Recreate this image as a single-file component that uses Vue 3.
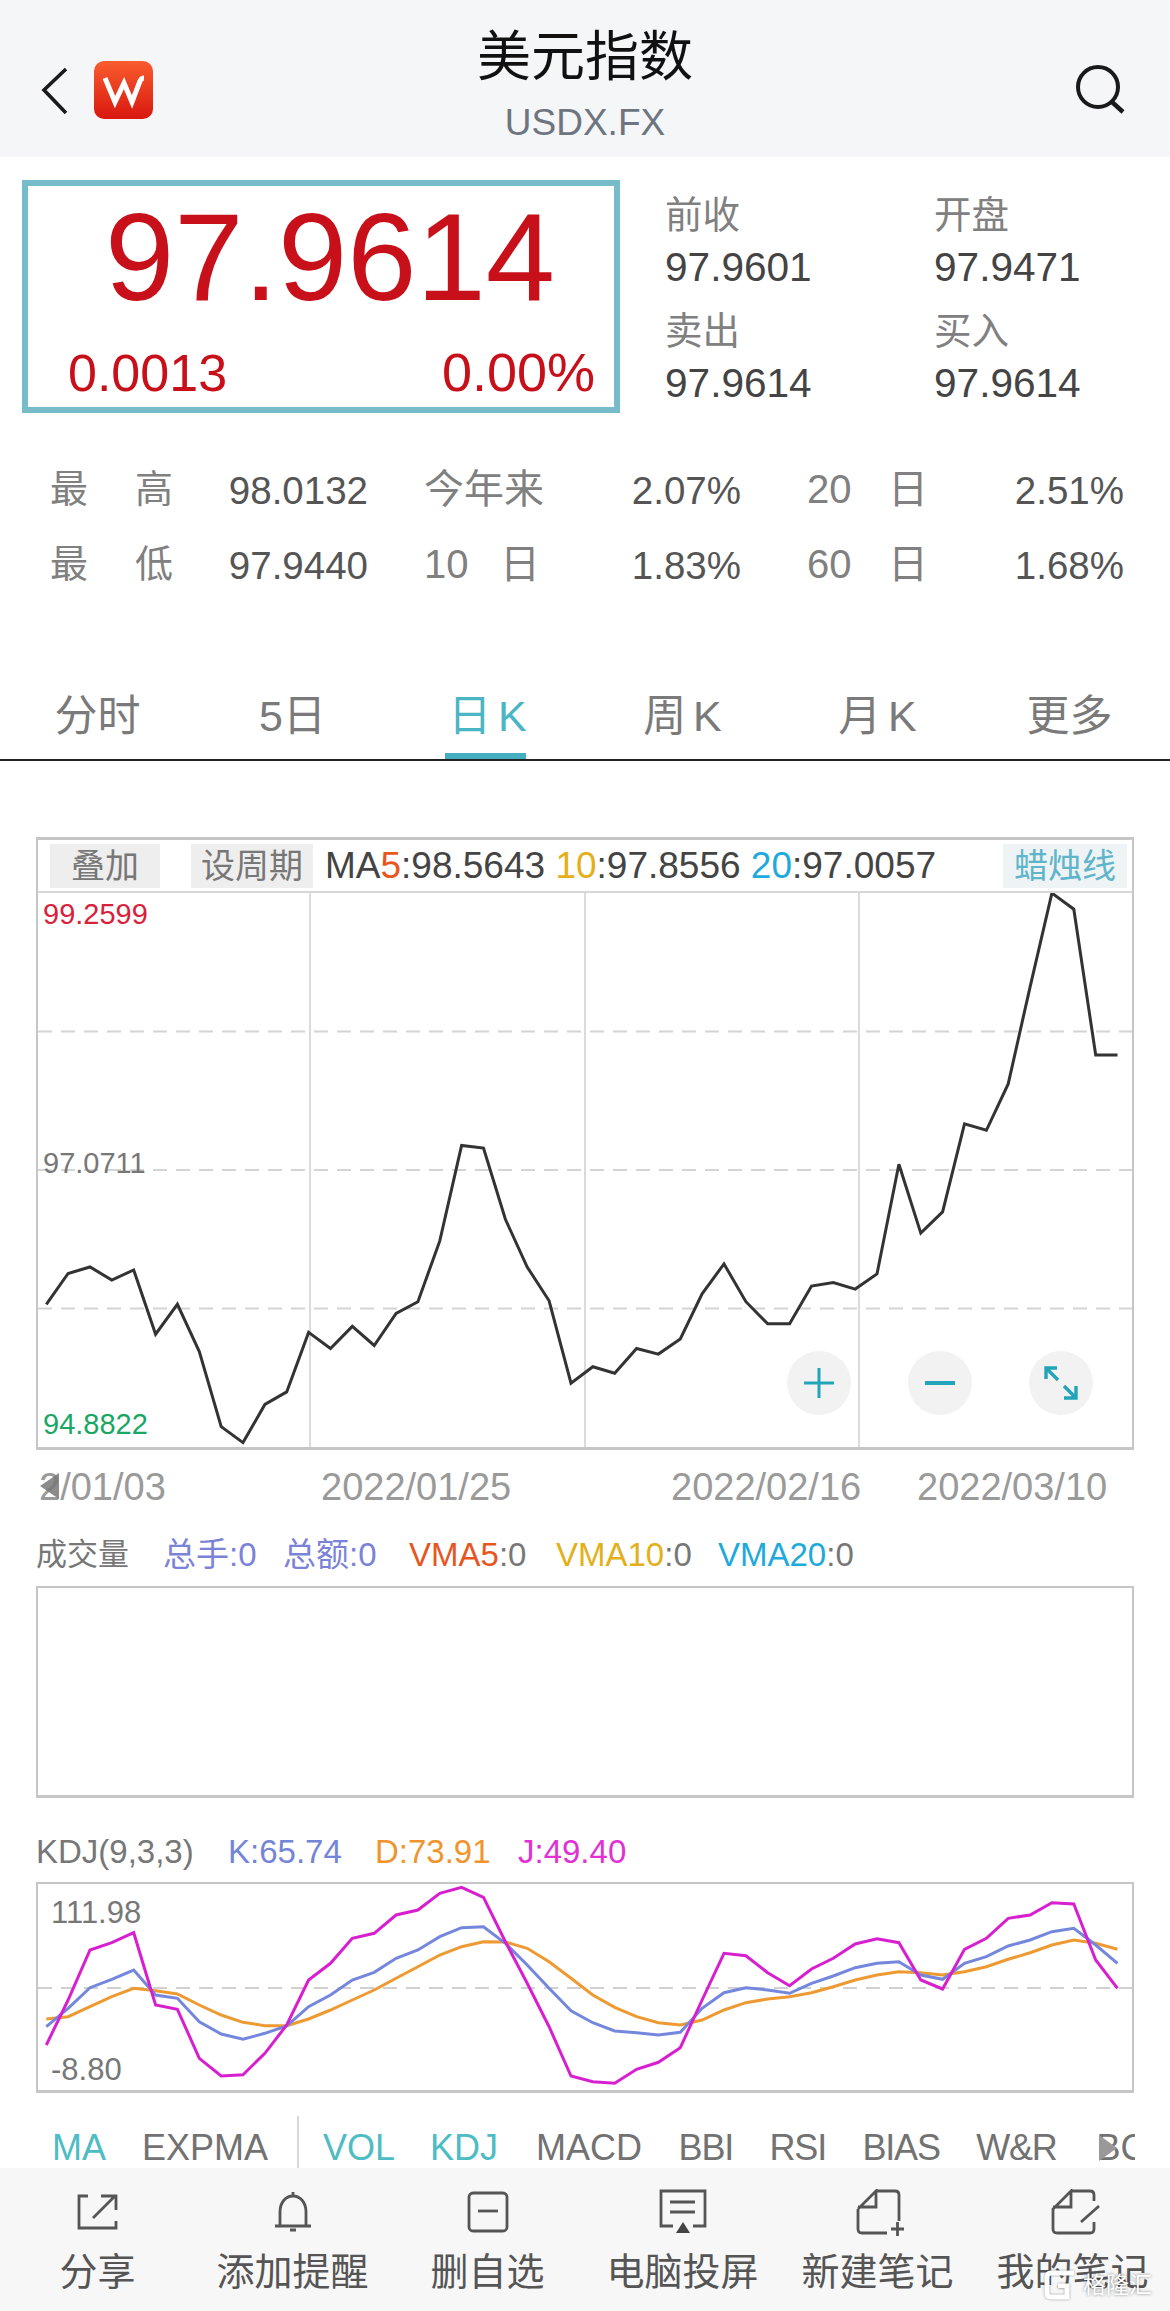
<script setup>
const xs = (i) => 46.25 + i * 21.863
const mainShown = [886,815,800,830,807,955,886,995,1168,1205,1117,1088,951,988,937,981,907,880,740,520,526,690,800,878,1068,1030,1045,988,1001,966,862,793,880,931,931,844,836,851,816,563,722,673,470,485,378,154,-62,-25,311,311]
const jShown = [675,540,390,368,338,555,568,715,768,764,700,615,480,430,355,340,285,270,220,202,232,365,490,620,768,785,790,748,727,683,540,400,407,458,497,447,415,372,356,368,480,507,388,355,295,285,248,252,420,505]
const kShown = [620,565,503,478,450,525,535,605,642,658,640,618,560,525,480,457,415,390,350,323,320,370,435,505,572,608,633,638,645,637,565,518,503,510,520,490,468,443,430,425,465,478,430,410,378,360,335,325,375,430]
const dShown = [597,590,560,530,505,512,522,555,585,607,617,617,597,570,540,510,475,440,405,380,365,366,385,425,475,525,562,590,608,615,600,570,548,537,530,518,500,480,465,455,458,465,455,440,418,398,375,360,370,388]
const pts = (arr, fn) => arr.map((v, i) => `${xs(i).toFixed(1)},${fn(v).toFixed(1)}`).join(' ')
const mainLine = pts(mainShown, (v) => 920 + v * 0.4337)
const kdjY = (v) => 1820 + v / 3
const jLine = pts(jShown, kdjY)
const kLine = pts(kShown, kdjY)
const dLine = pts(dShown, kdjY)
const gridX = [310, 585, 859]
const gridY = [1031.5, 1170, 1308.5]
const tabs = ['分时', '5日', '日 K', '周 K', '月 K', '更多']
const stats = [
  [['最', '高'], '98.0132', ['今年来'], '2.07%', ['20', '日'], '2.51%'],
  [['最', '低'], '97.9440', ['10', '日'], '1.83%', ['60', '日'], '1.68%']
]
const side = [['前收', '97.9601'], ['开盘', '97.9471'], ['卖出', '97.9614'], ['买入', '97.9614']]
const dates = ['2/01/03', '2022/01/25', '2022/02/16', '2022/03/10']
const inds = [['MACD', false], ['BBI', true], ['RSI', true], ['BIAS', true], ['W&R', true]]
const actions = ['分享', '添加提醒', '删自选', '电脑投屏', '新建笔记', '我的笔记']
</script>

<template>
  <div class="page">
    <header class="top">
      <div class="top-left">
        <svg class="chev" width="30" height="50" viewBox="0 0 30 50"><path d="M26 4 L4 25 L26 48" fill="none" stroke="#1a1a1a" stroke-width="3.6"/></svg>
        <div class="logo">
          <svg width="59" height="58" viewBox="0 0 59 58"><path d="M11 17 L21 41 L30 22 L38 41 L46 20 Q47.5 17 50 17" fill="none" stroke="#fff" stroke-width="5"/></svg>
        </div>
      </div>
      <div class="top-mid">
        <div class="title">美元指数</div>
        <div class="sym">USDX.FX</div>
      </div>
      <div class="top-right">
        <svg width="56" height="56" viewBox="0 0 56 56"><circle cx="24" cy="27" r="20" fill="none" stroke="#1a1a1a" stroke-width="4"/><path d="M38 42 L49 52" stroke="#1a1a1a" stroke-width="4.4" fill="none"/></svg>
      </div>
    </header>

    <section class="quote">
      <div class="pbox">
        <div class="price">97.9614</div>
        <div class="chg"><span>0.0013</span><span class="pct">0.00%</span></div>
      </div>
      <div class="side">
        <div v-for="c in side" :key="c[0]" class="cell">
          <div class="cell-l">{{ c[0] }}</div>
          <div class="cell-v">{{ c[1] }}</div>
        </div>
      </div>
    </section>

    <section class="stats">
      <template v-for="(r, ri) in stats" :key="ri">
        <div class="s-lab c1"><span v-for="t in r[0]" :key="t">{{ t }}</span></div>
        <div class="s-val">{{ r[1] }}</div>
        <div class="s-lab c3" :class="{ pair: r[2].length === 2 }"><span v-for="t in r[2]" :key="t">{{ t }}</span></div>
        <div class="s-val">{{ r[3] }}</div>
        <div class="s-lab c5"><span v-for="t in r[4]" :key="t">{{ t }}</span></div>
        <div class="s-val">{{ r[5] }}</div>
      </template>
    </section>

    <nav class="tabs">
      <div v-for="(t, i) in tabs" :key="t" class="tab" :class="{ on: i === 2 }">{{ t }}</div>
    </nav>

    <section class="main">
      <div class="main-head">
        <span class="chip chip-a">叠加</span>
        <span class="chip chip-b">设周期</span>
        <span class="ma">MA<i class="c-o">5</i>:98.5643 <i class="c-y">10</i>:97.8556 <i class="c-b">20</i>:97.0057</span>
        <span class="chip chip-c">蜡烛线</span>
      </div>
      <div class="plot">
        <svg class="plot-svg" width="1094" height="554" viewBox="38 893 1094 554">
          <line v-for="x in gridX" :key="x" :x1="x" :x2="x" y1="893" y2="1447" stroke="#cfcfcf" stroke-width="1.5"/>
          <line v-for="y in gridY" :key="y" x1="38" x2="1132" :y1="y" :y2="y" stroke="#d4d4d4" stroke-width="2" stroke-dasharray="14 9"/>
          <polyline :points="mainLine" fill="none" stroke="#333" stroke-width="3" stroke-linejoin="miter"/>
        </svg>
        <span class="pl pl-hi">99.2599</span>
        <span class="pl pl-mid">97.0711</span>
        <span class="pl pl-lo">94.8822</span>
        <div class="zoom-btns">
          <div class="zb">
            <svg width="64" height="64" viewBox="0 0 64 64"><path d="M17 32 H47 M32 17 V47" stroke="#22a5b8" stroke-width="3" fill="none"/></svg>
          </div>
          <div class="zb">
            <svg width="64" height="64" viewBox="0 0 64 64"><path d="M17 32 H47" stroke="#22a5b8" stroke-width="4" fill="none"/></svg>
          </div>
          <div class="zb">
            <svg width="64" height="64" viewBox="0 0 64 64"><path d="M17 28 V17 H28 M17 17 L29 29 M47 35 V47 H35 M47 47 L35 35" stroke="#22a5b8" stroke-width="3.4" fill="none"/></svg>
          </div>
        </div>
      </div>
    </section>

    <div class="dates">
      <span v-for="d in dates" :key="d" class="date">{{ d }}</span>
      <svg class="d-arrow" width="24" height="36" viewBox="0 0 24 36"><path d="M22 4 L22 30 L3 17 Z" fill="#777"/></svg>
    </div>

    <div class="legend vol-leg">
      <span class="g small">成交量</span>
      <span class="c-p">总手:0</span>
      <span class="c-p">总额:0</span>
      <span class="g"><i class="c-o">VMA5</i>:0</span>
      <span class="g"><i class="c-y">VMA10</i>:0</span>
      <span class="g"><i class="c-b">VMA20</i>:0</span>
    </div>
    <div class="vol-box"></div>

    <div class="legend kdj-leg">
      <span class="g">KDJ(9,3,3)</span>
      <span class="k-k">K:65.74</span>
      <span class="k-d">D:73.91</span>
      <span class="k-j">J:49.40</span>
    </div>
    <div class="kdj-box">
      <svg class="kdj-svg" width="1094" height="207" viewBox="38 1884 1094 207">
        <line x1="38" x2="1132" y1="1988" y2="1988" stroke="#d0d0d0" stroke-width="2" stroke-dasharray="14 9"/>
        <polyline :points="dLine" fill="none" stroke="#ee9a32" stroke-width="3"/>
        <polyline :points="kLine" fill="none" stroke="#7487dc" stroke-width="3"/>
        <polyline :points="jLine" fill="none" stroke="#d81fcf" stroke-width="3"/>
      </svg>
      <span class="kl kl-hi">111.98</span>
      <span class="kl kl-lo">-8.80</span>
    </div>

    <div class="inds">
      <span class="on">MA</span>
      <span class="exp">EXPMA</span>
      <span class="sep"></span>
      <span class="on">VOL</span>
      <span class="on">KDJ</span>
      <span v-for="n in inds" :key="n[0]" :class="n[1] ? 'tight' : 'mac'">{{ n[0] }}</span>
      <span class="bc">BC<svg class="bc-arrow" width="20" height="28" viewBox="0 0 20 28"><path d="M1 1 L19 14 L1 27 Z" fill="#999"/></svg></span>
    </div>

    <footer class="bar">
      <div class="act">
        <svg width="60" height="50" viewBox="0 0 60 50"><path d="M20 7 H11 V39 H48 V32 M25 29 L47 7 M33 7 H48 V21" fill="none" stroke="#555" stroke-width="2.8"/></svg>
        <span>{{ actions[0] }}</span>
      </div>
      <div class="act">
        <svg width="60" height="50" viewBox="0 0 60 50"><path d="M17 37 V23 C17 13 23 7 30 7 C37 7 43 13 43 23 V37 M12 37 H48 M27 41 H33 M30 3 V6" fill="none" stroke="#555" stroke-width="2.8"/></svg>
        <span>{{ actions[1] }}</span>
      </div>
      <div class="act">
        <svg width="60" height="50" viewBox="0 0 60 50"><rect x="11" y="4" width="38" height="38" rx="4" fill="none" stroke="#555" stroke-width="2.8"/><path d="M20 22 H40" stroke="#555" stroke-width="2.8"/></svg>
        <span>{{ actions[2] }}</span>
      </div>
      <div class="act">
        <svg width="60" height="50" viewBox="0 0 60 50"><path d="M20 37 H8 V2 H52 V37 H40 M17 13 H42 M17 23 H42" fill="none" stroke="#555" stroke-width="2.8"/><path d="M30 33 L37 44 H23 Z" fill="#444"/></svg>
        <span>{{ actions[3] }}</span>
      </div>
      <div class="act">
        <svg width="60" height="50" viewBox="0 0 60 50"><path d="M28 2 H47 Q51 2 51 6 V32 M10 20 V40 Q10 44 14 44 H39 M10 20 L28 2 V18 H10 M43 40 H56 M49.5 33 V47" fill="none" stroke="#555" stroke-width="2.8"/></svg>
        <span>{{ actions[4] }}</span>
      </div>
      <div class="act">
        <svg width="60" height="50" viewBox="0 0 60 50"><path d="M28 2 H47 Q51 2 51 6 V12 M51 33 V40 Q51 44 47 44 H14 Q10 44 10 40 V20 L28 2 V18 H10 M56 17 L38 33" fill="none" stroke="#555" stroke-width="2.8"/></svg>
        <span>{{ actions[5] }}</span>
      </div>
      <div class="wm">
        <svg width="36" height="34" viewBox="0 0 36 34"><path d="M31 5 H8 Q4 5 4 9 V25 Q4 29 8 29 H24 V18 H15" fill="none" stroke="#fff" stroke-width="5"/></svg>
        <span>格隆汇</span>
      </div>
    </footer>
  </div>
</template>

<style>
html, body { margin: 0; background: #fff; }
</style>

<style scoped>
.page {
  width: 1170px;
  height: 2311px;
  overflow: hidden;
  background: #fff;
  font-family: "Liberation Sans", "Noto Sans CJK SC", sans-serif;
  color: #555;
  position: relative;
}
i { font-style: normal; }

.top {
  height: 157px;
  background: #f5f6f8;
  display: grid;
  grid-template-columns: 1fr auto 1fr;
}
.top-left { display: flex; align-items: flex-start; padding: 61px 0 0 40px; }
.chev { margin-top: 4px; margin-right: 24px; }
.logo {
  width: 59px;
  height: 58px;
  border-radius: 10px;
  background: linear-gradient(#f95c2e, #d9180f);
}
.logo svg { display: block; }
.top-mid { text-align: center; padding-top: 25px; }
.title { font-size: 54px; line-height: 64px; color: #111; }
.sym { font-size: 37px; line-height: 68px; color: #6d7580; }
.top-right { display: flex; justify-content: flex-end; padding: 60px 40px 0 0; }
.top-right svg { display: block; }

.quote { display: flex; margin: 23px 0 0 22px; }
.pbox {
  box-sizing: border-box;
  width: 598px;
  height: 233px;
  border: 6px solid #76bccb;
  color: #c8101a;
}
.price { font-size: 124.5px; line-height: 142px; padding-left: 77px; }
.chg {
  display: flex;
  justify-content: space-between;
  align-items: baseline;
  font-size: 52px;
  line-height: 70px;
  padding: 9px 19px 0 40px;
}
.pct { font-size: 54px; }
.side {
  margin: 6px 0 0 45px;
  display: grid;
  grid-template-columns: 269px 200px;
  grid-auto-rows: 108px;
  row-gap: 8px;
}
.cell-l { font-size: 37.5px; height: 54px; line-height: 58px; color: #808080; }
.cell-v { font-size: 40.6px; line-height: 54px; color: #444; }

.stats {
  margin: 40px 0 0 50px;
  display: grid;
  grid-template-columns: 123px 196px 174px 199px 186px 197px;
  grid-auto-rows: 75px;
  line-height: 75px;
}
.s-lab {
  display: flex;
  justify-content: space-between;
  align-items: baseline;
  font-size: 38px;
  line-height: 73px;
  height: 75px;
  white-space: nowrap;
  color: #808080;
}
.s-val { font-size: 38.5px; text-align: right; color: #555; padding-right: 1px; }
.c3, .c5 { font-size: 40px; }
.c3 { padding-left: 55px; }
.c3.pair { padding-right: 3px; }
.c5 { padding-left: 65px; }

.tabs {
  margin-top: 68px;
  height: 88px;
  border-bottom: 2px solid #222;
  display: flex;
}
.tab {
  flex: 1;
  text-align: center;
  font-size: 43px;
  line-height: 91px;
  height: 88px;
  color: #7a7a7a;
  word-spacing: -5px;
  position: relative;
}
.tab:last-child { text-indent: -6px; }
.tab.on { color: #4ab5c4; }
.tab.on::after {
  content: "";
  position: absolute;
  left: calc(50% - 43px);
  bottom: 0;
  width: 81px;
  height: 6px;
  background: #45aec0;
}

.main {
  box-sizing: border-box;
  margin: 76px 0 0 36px;
  width: 1098px;
  border: 2px solid #c6c6c6;
  border-top-width: 3px;
  border-bottom-width: 3px;
}
.main-head {
  box-sizing: border-box;
  height: 53px;
  display: flex;
  align-items: center;
  border-bottom: 2px solid #d8d8d8;
}
.chip {
  font-size: 34px;
  line-height: 44px;
  height: 44px;
  background: #eeeeee;
  color: #777;
  text-align: center;
}
.chip-a { width: 110px; margin-left: 12px; }
.chip-b { width: 122px; margin-left: 31px; }
.chip-c { width: 124px; margin-left: auto; margin-right: 5px; background: #eef3f5; color: #5fb5c9; }
.ma { font-size: 37px; color: #444; margin-left: 12px; white-space: nowrap; }
.c-o { color: #e8561f; }
.c-y { color: #e3b01a; }
.c-b { color: #1eaadb; }
.c-p { color: #7b83d8; }
.g { color: #777; }

.plot { position: relative; height: 554px; }
.plot-svg { display: block; }
.pl { position: absolute; left: 5px; font-size: 29px; line-height: 32px; }
.pl-hi { top: 5px; color: #d8213a; }
.pl-mid { top: 254px; color: #777; }
.pl-lo { top: 515px; color: #1aa765; }
.zoom-btns {
  position: absolute;
  top: 458px;
  left: 749px;
  display: flex;
  gap: 57px;
}
.zb {
  width: 64px;
  height: 64px;
  border-radius: 50%;
  background: #f2f2f3;
}
.zb svg { display: block; }

.dates {
  position: relative;
  height: 77px;
  display: grid;
  grid-template-columns: 282px 350px 246px auto;
  padding-left: 39px;
  font-size: 38px;
  line-height: 74px;
  color: #9a9a9a;
}
.d-arrow { position: absolute; left: 37px; top: 19px; opacity: 0.85; }

.legend { display: grid; font-size: 33px; line-height: 40px; padding-left: 36px; white-space: nowrap; }
.vol-leg { margin-top: 8px; grid-template-columns: 127px 120px 126px 147px 162px auto; }
.small { font-size: 31px; }
.vol-box {
  box-sizing: border-box;
  margin: 11px 0 0 36px;
  width: 1098px;
  height: 212px;
  border: 2px solid #c6c6c6;
  border-bottom-width: 3px;
}
.kdj-leg { margin-top: 34px; grid-template-columns: 192px 147px 143px auto; }
.k-k { color: #7485d8; }
.k-d { color: #f0952e; }
.k-j { color: #e032d2; }
.kdj-box {
  box-sizing: border-box;
  margin: 10px 0 0 36px;
  width: 1098px;
  height: 211px;
  border: 2px solid #c6c6c6;
  border-bottom-width: 3px;
  position: relative;
}
.kdj-svg { display: block; }
.kl { position: absolute; left: 13px; font-size: 31px; line-height: 34px; color: #777; }
.kl-hi { top: 12px; }
.kl-lo { top: 169px; }

.inds {
  margin-top: 23px;
  width: 1135px;
  height: 52px;
  box-sizing: border-box;
  padding-left: 52px;
  display: flex;
  gap: 35px;
  overflow: hidden;
  font-size: 36px;
  line-height: 64px;
  color: #727272;
  white-space: nowrap;
}
.inds > span { flex: none; }
.inds .on { color: #4dbcc4; }
.inds .exp { margin-left: 1px; }
.inds .sep { width: 2px; height: 52px; background: #d8d8d8; margin: 0 -11px 0 -6px; }
.inds .mac { margin-left: 3px; }
.inds .tight { letter-spacing: -1.2px; margin-left: 1.5px; }
.bc { position: relative; margin-left: 5px; }
.bc-arrow { position: absolute; left: 1px; top: 18px; }

.bar {
  height: 143px;
  background: #f7f7f8;
  display: flex;
  position: relative;
}
.act {
  width: 195px;
  display: flex;
  flex-direction: column;
  align-items: center;
  padding-top: 21px;
  font-size: 38px;
  line-height: 48px;
  color: #555;
}
.act svg { display: block; margin-bottom: 9px; }
.act span { white-space: nowrap; }
.wm {
  position: absolute;
  right: 18px;
  bottom: 9px;
  display: flex;
  align-items: center;
  gap: 4px;
  font-size: 23px;
  line-height: 34px;
  color: #fff;
  text-shadow: 0 0 3px rgba(0, 0, 0, 0.5);
}
.wm svg { display: block; filter: drop-shadow(0 0 1px rgba(0, 0, 0, 0.4)); }
</style>
